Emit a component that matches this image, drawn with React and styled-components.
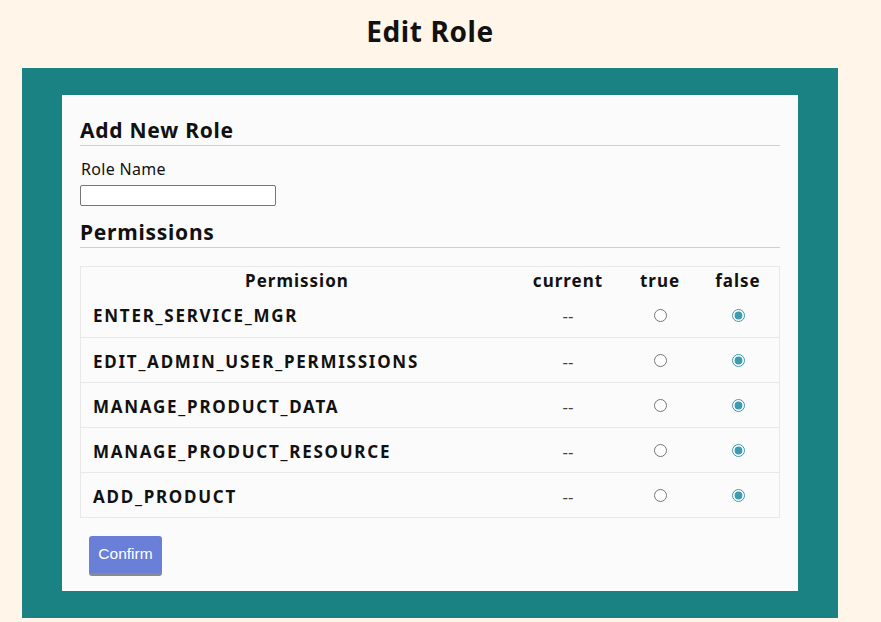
import React from "react";
import styled, { createGlobalStyle } from "styled-components";

const GlobalStyle = createGlobalStyle`
    body {
        margin: 0;
        background: #fff5e9;
        font-family: "Noto Sans", "Open Sans", sans-serif;
        color: #111;
    }
`

const permissions = [
    'ENTER_SERVICE_MGR',
    'EDIT_ADMIN_USER_PERMISSIONS',
    'MANAGE_PRODUCT_DATA',
    'MANAGE_PRODUCT_RESOURCE',
    'ADD_PRODUCT',
]

function App() {
    return (
        <>
            <GlobalStyle />
            <Page>
                <Title>Edit Role</Title>
                <Frame>
                    <Card>
                        <SectionTitle>Add New Role</SectionTitle>
                        <Label htmlFor="roleName">Role Name</Label>
                        <NameInput id="roleName" type="text" />

                        <SectionTitle>Permissions</SectionTitle>
                        <Table>
                            <thead>
                                <tr>
                                    <Th>Permission</Th>
                                    <Th>current</Th>
                                    <Th>true</Th>
                                    <Th>false</Th>
                                </tr>
                            </thead>
                            <tbody>
                                {permissions.map(name => (
                                    <Row key={name}>
                                        <NameCell>{name}</NameCell>
                                        <Cell>--</Cell>
                                        <Cell>
                                            <Radio type="radio" name={name} />
                                        </Cell>
                                        <Cell>
                                            <Radio type="radio" name={name} defaultChecked />
                                        </Cell>
                                    </Row>
                                ))}
                            </tbody>
                        </Table>

                        <ConfirmBtn>Confirm</ConfirmBtn>
                    </Card>
                </Frame>
            </Page>
        </>
    )
}

export default App

const Page = styled.div`
    padding: 10px 43px 5px 22px;
`

const Title = styled.h1`
    margin: 0 0 16px;
    text-align: center;
    font-size: 28px;
    line-height: 42px;
    font-weight: 700;
    letter-spacing: 0.6px;
`

const Frame = styled.div`
    background: #1a8282;
    padding: 27px 40px;
`

const Card = styled.div`
    background: #fbfbfb;
    padding: 20px 18px 18px 18px;
    display: flex;
    flex-direction: column;
    align-items: flex-start;
`

const SectionTitle = styled.h2`
    align-self: stretch;
    margin: 0 0 8px;
    padding-bottom: 0;
    font-size: 21px;
    line-height: 30px;
    font-weight: 700;
    letter-spacing: 0.75px;
    border-bottom: 1px solid #cfcfcf;
`

const Label = styled.label`
    font-size: 16px;
    line-height: 24px;
    letter-spacing: 0.3px;
    margin: 3px 0 0 1px;
`

const NameInput = styled.input`
    width: 196px;
    height: 21px;
    box-sizing: border-box;
    border: 1px solid #767676;
    border-radius: 2px;
    margin: 4px 0 11px;
    background: #fff;
`

const Table = styled.table`
    align-self: stretch;
    margin-top: 10px;
    border-collapse: collapse;
    border: 1px solid #e8e8e8;
`

const Th = styled.th`
    font-size: 17px;
    font-weight: 700;
    letter-spacing: 1px;
    padding: 3px 0 0;
    height: 22px;
    line-height: 22px;
    text-align: center;
    &:nth-child(1) { width: auto; }
    &:nth-child(2) { width: 110px; }
    &:nth-child(3) { width: 74px; }
    &:nth-child(4) { width: 82px; }
`

const Row = styled.tr`
    height: 45px;
    & + & { border-top: 1px solid #e8e8e8; }
`

const NameCell = styled.td`
    padding: 3px 0 0 12px;
    font-size: 17px;
    font-weight: 700;
    letter-spacing: 1.75px;
`

const Cell = styled.td`
    padding: 3px 0 0;
    text-align: center;
    font-size: 17px;
    color: #444;
`

const Radio = styled.input`
    margin: 0 0 5px;
    width: 13px;
    height: 13px;
    accent-color: #3e9aae;
    vertical-align: middle;
`

const ConfirmBtn = styled.button`
    margin: 18px 0 0 9px;
    width: 73px;
    height: 37px;
    border: none;
    border-radius: 3px;
    background: #6a80d8;
    color: #fff;
    font-family: "Liberation Sans", Arial, sans-serif;
    font-size: 15.5px;
    box-shadow: 0 3px 0 #868a98;
`
